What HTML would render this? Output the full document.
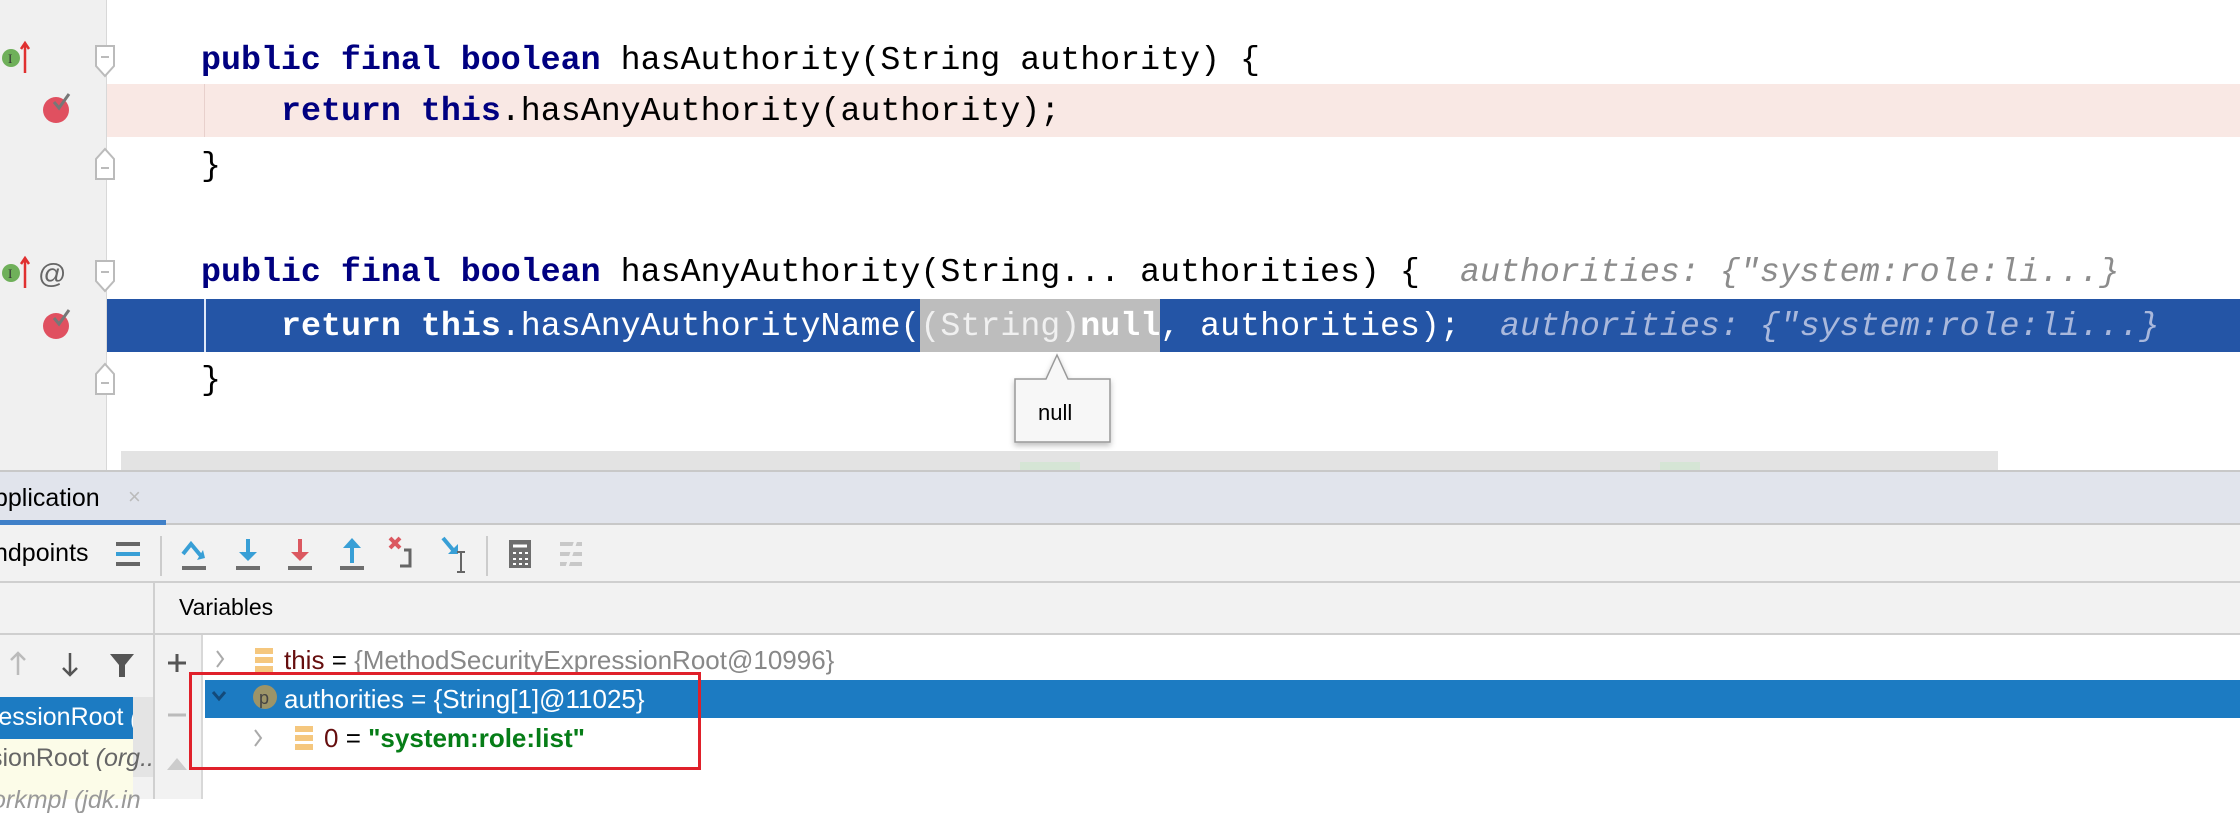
<!DOCTYPE html>
<html><head><meta charset="utf-8"><style>
*{margin:0;padding:0;box-sizing:border-box}
body{width:2240px;height:799px;overflow:hidden;background:#fff;position:relative;font-family:"Liberation Sans",sans-serif}
.abs{position:absolute}
.code{font-family:"Liberation Mono",monospace;font-size:33.3px;white-space:pre;line-height:54px;height:54px}
.kw{color:#000080;font-weight:bold}
.hint{font-style:italic;color:#8c8c8c}
.ui{font-size:25px;white-space:pre}
.vr{font-size:26px}
</style></head><body>
<!-- gutter -->
<div class="abs" style="left:0;top:0;width:107px;height:472px;background:#f0f0f0;border-right:1px solid #d8d8d8"></div>
<!-- rows -->
<div class="abs" style="left:107px;top:84px;width:2133px;height:53px;background:#f9e8e4"></div>
<div class="abs" style="left:107px;top:299px;width:2133px;height:53px;background:#2455a6"></div>
<div class="abs" style="left:204px;top:84px;width:1px;height:53px;background:#e8d0cc"></div>
<div class="abs" style="left:204px;top:299px;width:2px;height:53px;background:#e0e8f8"></div>
<div class="abs" style="left:920px;top:299px;width:240px;height:53px;background:#bdbdbd"></div>

<div class="abs code" style="left:201px;top:33px"><span class="kw">public final boolean</span> hasAuthority(String authority) {</div>
<div class="abs code" style="left:281px;top:84px"><span class="kw">return this</span>.hasAnyAuthority(authority);</div>
<div class="abs code" style="left:201px;top:139px">}</div>
<div class="abs code" style="left:201px;top:245px"><span class="kw">public final boolean</span> hasAnyAuthority(String... authorities) {</div>
<div class="abs code hint" style="left:1460px;top:245px">authorities: {"system:role:li...}</div>
<div class="abs code" style="left:281px;top:299px;color:#fff"><b>return this</b>.hasAnyAuthorityName(<span style="color:#f0f0f0">(String)</span><b>null</b>, authorities);</div>
<div class="abs code hint" style="left:1500px;top:299px;color:#a9b8dc">authorities: {"system:role:li...}</div>
<div class="abs code" style="left:201px;top:353px">}</div>

<!-- gutter icons -->
<svg class="abs" style="left:0;top:38px" width="100" height="40"><circle cx="11" cy="20" r="9" fill="#6fb05a"/><text x="8" y="25" font-size="13" fill="#333" font-family="Liberation Serif">I</text><path d="M25 35V6M21 11l4-6 4 6" stroke="#e03030" stroke-width="2.5" fill="none"/></svg>
<svg class="abs" style="left:40px;top:90px" width="40" height="40"><circle cx="16" cy="20" r="13" fill="#e05060"/><path d="M14 12l5 6 10-14" stroke="#777" stroke-width="3" fill="none"/></svg>
<svg class="abs" style="left:0;top:253px" width="100" height="40"><circle cx="11" cy="20" r="9" fill="#6fb05a"/><text x="8" y="25" font-size="13" fill="#333" font-family="Liberation Serif">I</text><path d="M25 35V6M21 11l4-6 4 6" stroke="#e03030" stroke-width="2.5" fill="none"/><text x="38" y="30" font-size="28" fill="#666">@</text></svg>
<svg class="abs" style="left:40px;top:306px" width="40" height="40"><circle cx="16" cy="20" r="13" fill="#e05060"/><path d="M14 12l5 6 10-14" stroke="#777" stroke-width="3" fill="none"/></svg>
<svg class="abs" style="left:94px;top:44px" width="24" height="34"><path d="M2 2h18v20l-9 10-9-10z" fill="#fff" stroke="#bbb" stroke-width="2"/><path d="M7 13h8" stroke="#bbb" stroke-width="2"/></svg>
<svg class="abs" style="left:94px;top:147px" width="24" height="34"><path d="M2 32h18V12L11 2 2 12z" fill="#fff" stroke="#bbb" stroke-width="2"/><path d="M7 21h8" stroke="#bbb" stroke-width="2"/></svg>
<svg class="abs" style="left:94px;top:259px" width="24" height="34"><path d="M2 2h18v20l-9 10-9-10z" fill="#fff" stroke="#bbb" stroke-width="2"/><path d="M7 13h8" stroke="#bbb" stroke-width="2"/></svg>
<svg class="abs" style="left:94px;top:362px" width="24" height="34"><path d="M2 32h18V12L11 2 2 12z" fill="#fff" stroke="#bbb" stroke-width="2"/><path d="M7 21h8" stroke="#bbb" stroke-width="2"/></svg>

<!-- scrollbar -->
<div class="abs" style="left:121px;top:451px;width:1877px;height:19px;background:#e3e3e3"></div>
<div class="abs" style="left:1020px;top:462px;width:60px;height:8px;background:#d5e5d5"></div>
<div class="abs" style="left:1660px;top:462px;width:40px;height:8px;background:#d5e5d5"></div>

<!-- tooltip -->
<svg class="abs" style="left:1008px;top:350px" width="112" height="100"><defs><filter id="s"><feDropShadow dx="0" dy="3" stdDeviation="3" flood-opacity=".25"/></filter></defs><path d="M7 29H38L49 5 60 29H102V92H7Z" fill="#f7f7f7" stroke="#999" stroke-width="1.5" filter="url(#s)"/><text x="30" y="70" font-size="22" font-family="Liberation Sans" fill="#000">null</text></svg>

<!-- tab bar -->
<div class="abs" style="left:0;top:470px;width:2240px;height:55px;background:#e1e4ec;border-top:2px solid #c8c8c8;border-bottom:2px solid #c8c8c8"></div>
<div class="abs ui" style="left:-6px;top:484px;color:#000">pplication</div>
<div class="abs ui" style="left:128px;top:484px;color:#bbb;font-size:22px">×</div>
<div class="abs" style="left:0;top:520px;width:166px;height:5px;background:#4080c8"></div>

<!-- toolbar -->
<div class="abs" style="left:0;top:525px;width:2240px;height:58px;background:#f2f2f2;border-bottom:2px solid #cfcfcf"></div>
<div class="abs ui" style="left:-6px;top:539px">ndpoints</div>
<svg class="abs" style="left:0;top:530px" width="600" height="50">
<path d="M116 14h24M116 24h24M116 34h24" stroke="#666" stroke-width="4"/><path d="M116 24h24" stroke="#389fd6" stroke-width="4"/>
<path d="M161 6v40M487 6v40" stroke="#ccc" stroke-width="2"/>
<path d="M182 38h24M236 38h24M288 38h24M340 38h24" stroke="#6e6e6e" stroke-width="4"/>
<path d="M183 24l8-10 10 12" stroke="#389fd6" stroke-width="4" fill="none"/><path d="M197 30l8-2-2-8z" fill="#389fd6"/>
<path d="M248 9v16" stroke="#389fd6" stroke-width="4"/><path d="M239 22h18l-9 9z" fill="#389fd6"/>
<path d="M300 9v16" stroke="#db5860" stroke-width="4"/><path d="M291 22h18l-9 9z" fill="#db5860"/>
<path d="M352 15v18" stroke="#389fd6" stroke-width="4"/><path d="M343 18h18l-9-10z" fill="#389fd6"/>
<path d="M390 8l10 10M400 8l-10 10" stroke="#db5860" stroke-width="4"/><path d="M404 20h6v16h-10" stroke="#666" stroke-width="3" fill="none"/>
<path d="M443 8l10 12" stroke="#389fd6" stroke-width="4"/><path d="M448 24h10v-10z" fill="#389fd6"/><path d="M461 22v20M457 22h8M457 42h8" stroke="#666" stroke-width="2"/>
<rect x="509" y="10" width="22" height="28" fill="#6e6e6e"/><path d="M513 16h14" stroke="#fff" stroke-width="3"/><path d="M513 23h3M519 23h3M525 23h3M513 29h3M519 29h3M525 29h3M513 34h3M519 34h3M525 34h3" stroke="#fff" stroke-width="2"/>
<path d="M560 14h22M560 24h22M560 34h22" stroke="#c8c8c8" stroke-width="4"/><path d="M566 40l10-30" stroke="#f2f2f2" stroke-width="3"/>
</svg>

<!-- variables header -->
<div class="abs" style="left:0;top:583px;width:2240px;height:52px;background:#f2f2f2;border-bottom:2px solid #cfcfcf"></div>
<div class="abs" style="left:153px;top:583px;width:2px;height:216px;background:#d0d0d0"></div>
<div class="abs ui" style="left:179px;top:594px;font-size:23px">Variables</div>

<!-- left panel -->
<div class="abs" style="left:0;top:635px;width:153px;height:164px;background:#f2f2f2"></div>
<svg class="abs" style="left:0;top:645px" width="150" height="40"><path d="M18 30V8M11 15l7-7 7 7" stroke="#bbb" stroke-width="2.5" fill="none"/><path d="M70 8v22M63 23l7 7 7-7" stroke="#555" stroke-width="2.5" fill="none"/><path d="M110 9h24l-9 11v12h-6V20z" fill="#555"/></svg>
<div class="abs" style="left:0;top:697px;width:133px;height:42px;background:#1c7bc2"></div>
<div class="abs" style="left:133px;top:697px;width:20px;height:80px;background:#e4e4e4"></div>
<div class="abs ui" style="left:-10px;top:703px;color:#fff;width:143px;overflow:hidden">ressionRoot <i>(</i></div>
<div class="abs" style="left:0;top:739px;width:133px;height:60px;background:#fcfce8"></div>
<div class="abs ui" style="left:-10px;top:744px;color:#666;width:162px;overflow:hidden">sionRoot <i>(org...</i></div>
<div class="abs ui" style="left:-8px;top:786px;color:#999"><i>orkmpl (jdk.in</i></div>

<!-- +/- column -->
<div class="abs" style="left:155px;top:635px;width:48px;height:164px;background:#f2f2f2;border-right:2px solid #d8d8d8"></div>
<svg class="abs" style="left:155px;top:645px" width="48" height="130"><path d="M13 18h18M22 9v18" stroke="#555" stroke-width="3"/><path d="M13 70h18" stroke="#bbb" stroke-width="3"/><path d="M12 125l10-12 10 12z" fill="#ccc"/></svg>

<!-- variable rows -->
<div class="abs" style="left:205px;top:680px;width:2035px;height:38px;background:#1c7bc2"></div>
<svg class="abs" style="left:205px;top:643px" width="120" height="120"><path d="M12 8l6 8-6 8" stroke="#aaa" stroke-width="2" fill="none"/><rect x="50" y="5" width="18" height="6" fill="#f5c77e"/><rect x="50" y="14" width="18" height="6" fill="#f5c77e"/><rect x="50" y="23" width="18" height="6" fill="#f5c77e"/>
<path d="M8 49l6 7 6-7" stroke="#134a7a" stroke-width="3" fill="none"/><circle cx="60" cy="54" r="12" fill="#9c9468"/><text x="54" y="61" font-size="18" font-family="Liberation Sans" fill="#444">p</text>
<path d="M50 87l6 8-6 8" stroke="#aaa" stroke-width="2" fill="none"/><rect x="90" y="83" width="18" height="6" fill="#f5c77e"/><rect x="90" y="92" width="18" height="6" fill="#f5c77e"/><rect x="90" y="101" width="18" height="6" fill="#f5c77e"/></svg>
<div class="abs ui vr" style="left:284px;top:645px"><span style="color:#660e0e">this</span> = <span style="color:#888">{MethodSecurityExpressionRoot@10996}</span></div>
<div class="abs ui vr" style="left:284px;top:684px;color:#fff">authorities = {String[1]@11025}</div>
<div class="abs ui vr" style="left:324px;top:723px"><span style="color:#660e0e">0</span> = <b style="color:#067d17">"system:role:list"</b></div>

<!-- red box -->
<div class="abs" style="left:189px;top:672px;width:512px;height:98px;border:3px solid #e0202a"></div>
</body></html>
